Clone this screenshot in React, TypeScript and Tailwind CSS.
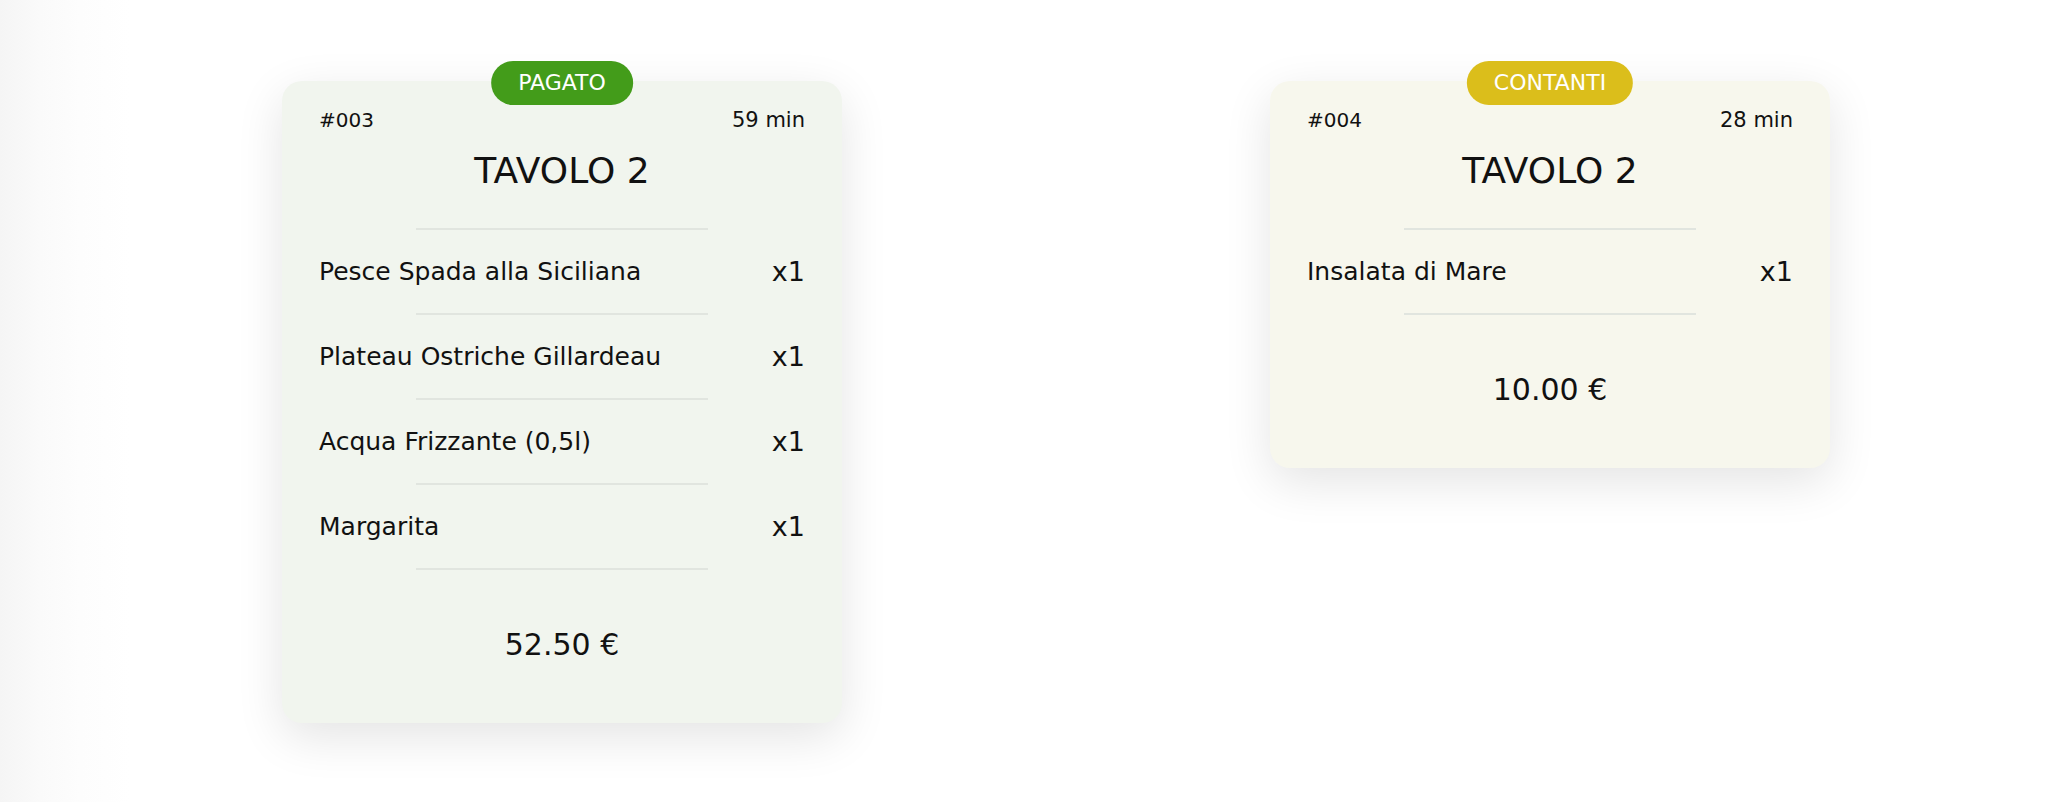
// Order tickets board — two table tickets with payment badges

type OrderItem = { name: string; qty: number }

type Ticket = {
  id: string
  minutes: number
  table: string
  badge: 'PAGATO' | 'CONTANTI'
  items: OrderItem[]
  total: string
}

const tickets: Ticket[] = [
  {
    id: '#003',
    minutes: 59,
    table: 'TAVOLO 2',
    badge: 'PAGATO',
    items: [
      { name: 'Pesce Spada alla Siciliana', qty: 1 },
      { name: 'Plateau Ostriche Gillardeau', qty: 1 },
      { name: 'Acqua Frizzante (0,5l)', qty: 1 },
      { name: 'Margarita', qty: 1 },
    ],
    total: '52.50 €',
  },
  {
    id: '#004',
    minutes: 28,
    table: 'TAVOLO 2',
    badge: 'CONTANTI',
    items: [{ name: 'Insalata di Mare', qty: 1 }],
    total: '10.00 €',
  },
]

function Divider() {
  return <div className="mx-auto h-[2px] w-[292px] bg-[#e1e5df]" />
}

function TicketCard({ ticket }: { ticket: Ticket }) {
  const paid = ticket.badge === 'PAGATO'
  return (
    <div
      className={
        'relative w-[560px] rounded-[20px] px-[37px] pt-[27px] pb-[60px] shadow-[0_14px_48px_rgba(0,0,0,0.11)] ' +
        (paid ? 'bg-[#f1f5ee]' : 'bg-[#f7f7ed]')
      }
    >
      <span
        className={
          'absolute left-1/2 top-[-20px] -translate-x-1/2 rounded-full px-[27px] text-[22px] leading-[44px] text-white ' +
          (paid ? 'bg-[#439c1a]' : 'bg-[#dbbe1b]')
        }
      >
        {ticket.badge}
      </span>

      <div className="flex items-center justify-between text-[20px] leading-[24px] text-[#111]">
        <span>{ticket.id}</span>
        <span className="text-[21px]">{ticket.minutes} min</span>
      </div>

      <div className="mt-[18px] text-center text-[36px] leading-[42px] text-[#111]">{ticket.table}</div>

      <div className="mt-[36px]">
        <Divider />
        {ticket.items.map((item) => (
          <div key={item.name}>
            <div className="flex h-[83px] items-center justify-between text-[#111]">
              <span className="text-[25px] leading-[30px]">{item.name}</span>
              <span className="text-[27px] leading-[30px]">x{item.qty}</span>
            </div>
            <Divider />
          </div>
        ))}
      </div>

      <div className="mt-[57px] text-center text-[30px] leading-[36px] text-[#111]">{ticket.total}</div>
    </div>
  )
}

export default function App() {
  return (
    <div
      className="min-h-[802px] w-full bg-[linear-gradient(to_right,#f5f5f5_0px,#fafafa_40px,#fdfdfd_80px,#ffffff_130px)]"
      style={{ fontFamily: '"DejaVu Sans", "Noto Sans", sans-serif' }}
    >
      <div className="flex items-start gap-[428px] pl-[282px] pt-[81px]">
        {tickets.map((t) => (
          <TicketCard key={t.id} ticket={t} />
        ))}
      </div>
    </div>
  )
}
